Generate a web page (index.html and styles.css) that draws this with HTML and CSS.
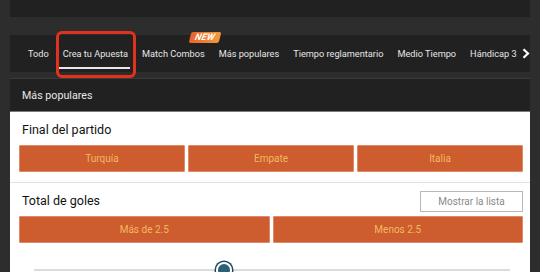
FILE: index.html
```html
<!DOCTYPE html>
<html lang="es">
<head>
<meta charset="utf-8">
<link rel="stylesheet" href="styles.css">
</head>
<body>
<div class="page">
  <div class="topbar"></div>
  <nav class="tabs">
    <span class="tab">Todo</span>
    <span class="tab active">Crea tu Apuesta</span>
    <span class="tab has-badge">Match Combos<span class="badge">NEW</span></span>
    <span class="tab">Más populares</span>
    <span class="tab">Tiempo reglamentario</span>
    <span class="tab">Medio Tiempo</span>
    <span class="tab">Hándicap 3</span>
    <svg class="chev" width="8" height="11" viewBox="0 0 8 11"><path d="M1.5 1.2 L6 5.5 L1.5 9.8" fill="none" stroke="#fff" stroke-width="2.2"/></svg>
  </nav>
  <div class="section-head">Más populares</div>
  <div class="panel">
    <div class="market">
      <div class="market-title">Final del partido</div>
      <div class="odds three">
        <button class="odd">Turquía</button>
        <button class="odd">Empate</button>
        <button class="odd">Italia</button>
      </div>
    </div>
    <div class="market">
      <div class="market-row">
        <div class="market-title">Total de goles</div>
        <button class="list-btn">Mostrar la lista</button>
      </div>
      <div class="odds two">
        <button class="odd">Más de 2.5</button>
        <button class="odd">Menos 2.5</button>
      </div>
      <div class="slider"><span class="thumb"></span></div>
    </div>
  </div>
</div>
</body>
</html>
```

FILE: styles.css
```css
* { box-sizing: border-box; }
html, body { margin: 0; height: 272px; overflow: hidden; }
body {
  background: #2d2d2d;
  font-family: Roboto, "Liberation Sans", sans-serif;
}
.page { padding: 0 10px; height: 272px; overflow: hidden; }
.topbar { height: 17px; background: #212121; }
.tabs {
  margin-top: 18px;
  height: 37px;
  background: #212121;
  display: flex;
  align-items: center;
  gap: 14px;
  padding-left: 18px;
  position: relative;
}
.tab {
  color: #e6e6e6;
  font-size: 9.2px;
  white-space: nowrap;
  position: relative;
}
.tab.active::before {
  content: "";
  position: absolute;
  left: -7px; right: -8px; top: -17px; bottom: -19px;
  border: 3px solid #e2321f;
  border-radius: 6px;
}
.tab.active::after {
  content: "";
  position: absolute;
  left: -4px; right: -2px; bottom: -10px;
  height: 2px;
  background: #e8e8e8;
}
.badge {
  position: absolute;
  left: 48px; top: -16px;
  width: 30px; height: 11px;
  background: linear-gradient(90deg, #e8642a, #f29a3c);
  transform: skewX(-14deg);
  border-radius: 2px;
  color: #fff;
  font-size: 9px;
  font-weight: bold;
  font-style: italic;
  line-height: 11px;
  text-align: center;
  letter-spacing: 0.3px;
}
.chev { margin-left: -9px; }
.section-head {
  margin-top: 6px;
  border-top: 1px solid #3a3a3a;
  height: 34px;
  background: #212121;
  border-bottom: 1px solid #7a7a7a;
  color: #e8e8e8;
  font-size: 10.7px;
  padding: 10px 0 0 12px;
}
.panel { background: #fff; height: 160px; }
.market { padding: 0 7px 0 9px; border-bottom: 1px solid #e2e2e2; }
.market + .market { border-bottom: none; }
.market-title {
  font-size: 12.5px;
  color: #111;
  padding: 10px 0 0 3px;
  height: 33px;
}
.market-row { display: flex; justify-content: space-between; align-items: flex-start; }
.list-btn {
  margin-top: 8px;
  width: 103px; height: 21px;
  border: 1px solid #b8b8b8;
  background: #fff;
  color: #8a8a8a;
  font-family: inherit;
  font-size: 10px;
  padding: 0;
}
.odds { display: grid; gap: 3px; padding-bottom: 10px; }
.odds.three { grid-template-columns: 1fr 1fr 1fr; }
.odds.two { grid-template-columns: 1fr 1fr; }
.odd {
  height: 27px;
  background: #cd5c2e;
  border: 1px solid #e0886a;
  border-radius: 1px;
  color: #f3b960;
  font-family: inherit;
  font-size: 10px;
  padding: 0;
}
.slider {
  position: relative;
  margin: 16px 13px 0 15px;
  height: 2px;
  background: #dcdcdc;
}
.thumb {
  position: absolute;
  left: 182px; top: -7px;
  width: 16px; height: 16px;
  border-radius: 50%;
  background: #2b6079;
  border: 2px solid #fff;
  box-shadow: 0 0 0 1.5px #1f4557;
}
```
